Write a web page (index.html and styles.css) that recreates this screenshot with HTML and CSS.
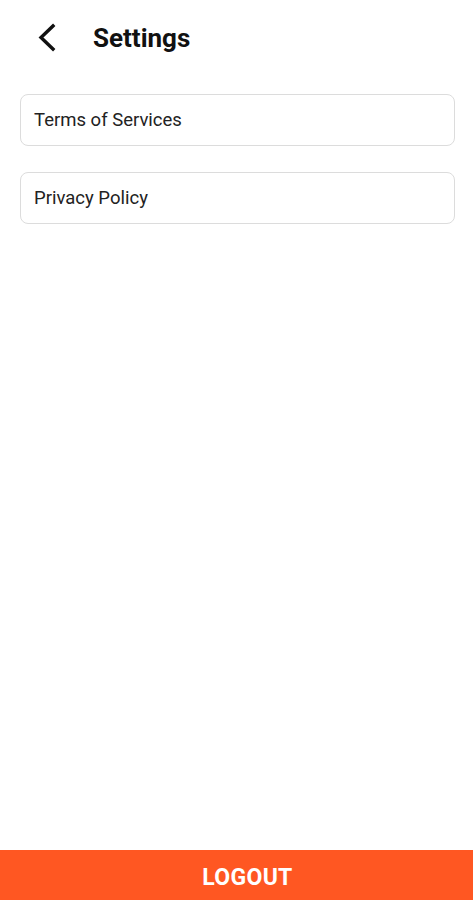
FILE: index.html
```html
<!DOCTYPE html>
<html lang="en">
<head>
  <meta charset="UTF-8"/>
  <meta name="viewport" content="width=device-width, initial-scale=1.0"/>
  <title>Settings</title>
  <link rel="stylesheet" href="styles.css">
</head>
<body>
  <div class="screen">
    <header class="topbar">
      <button class="back" aria-label="Back">
        <svg width="24" height="30" viewBox="0 0 24 30">
          <path d="M17 3 L5 14.5 L17 26" fill="none" stroke="#111" stroke-width="3.4" stroke-linecap="square"/>
        </svg>
      </button>
      <h1>Settings</h1>
    </header>

    <div class="menu">
      <a class="menu-item" href="#">Terms of Services</a>
      <a class="menu-item" href="#">Privacy Policy</a>
    </div>

    <button class="logout">LOGOUT</button>
  </div>
</body>
</html>
```

FILE: styles.css
```css
* {
  box-sizing: border-box;
  margin: 0;
  padding: 0;
}

body {
  font-family: Roboto, 'Noto Sans', sans-serif;
  background: #fff;
  color: #222;
}

.screen {
  height: 100vh;
  display: flex;
  flex-direction: column;
}

.topbar {
  height: 76px;
  display: flex;
  align-items: center;
  padding-left: 36px;
  gap: 33px;
}

.back {
  border: none;
  background: none;
  display: flex;
  cursor: pointer;
}

h1 {
  font-size: 26px;
  font-weight: 700;
  color: #111;
}

.menu {
  display: flex;
  flex-direction: column;
  gap: 26px;
  padding: 18px 18px 0 20px;
}

.menu-item {
  height: 52px;
  display: flex;
  align-items: center;
  padding: 0 13px;
  border: 1px solid #dcdcdc;
  border-radius: 8px;
  font-size: 18.5px;
  color: #222;
  text-decoration: none;
}

.logout {
  margin-top: auto;
  height: 50px;
  padding: 4px 0 0 22px;
  border: none;
  background: #ff5722;
  color: #fff;
  font-family: Roboto, sans-serif;
  font-size: 23px;
  font-weight: 700;
  letter-spacing: 0.3px;
  cursor: pointer;
}
```
